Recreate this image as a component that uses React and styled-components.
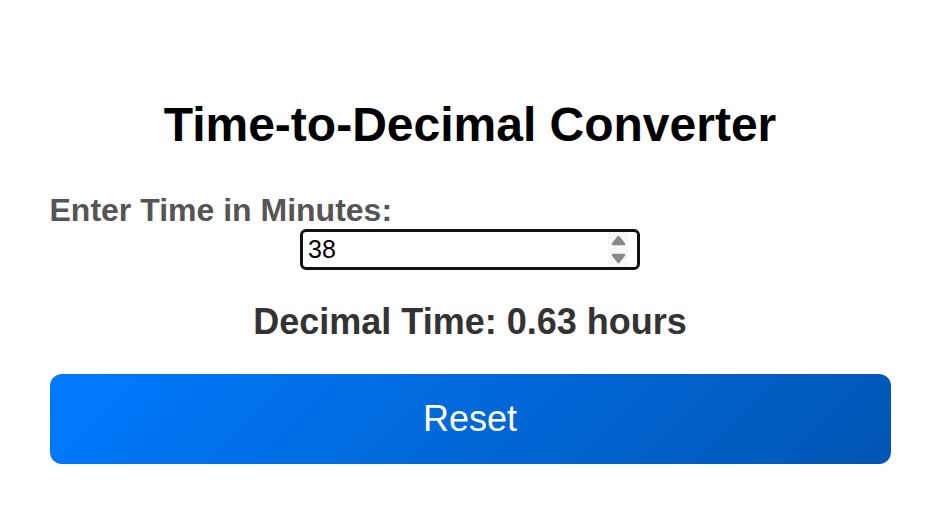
import React, { useState } from 'react'
import styled, { createGlobalStyle } from 'styled-components'

const GlobalStyle = createGlobalStyle`
    html, body {
        margin: 0;
        padding: 0;
        background: #ffffff;
        font-family: "Liberation Sans", Arial, sans-serif;
    }
`;

const Container = styled.div`
    max-width: 841px;
    margin: 0 auto;
    padding-top: 97px;
    display: flex;
    flex-direction: column;
    align-items: center;
`;

const Title = styled.h1`
    margin: 0 0 40px;
    font-size: 48px;
    font-weight: bold;
    color: #000000;
`;

const Label = styled.label`
    align-self: stretch;
    font-size: 32px;
    font-weight: bold;
    color: #555555;
`;

const InputWrap = styled.div`
    position: relative;
    width: 340px;
    height: 41px;
`;

const Input = styled.input`
    box-sizing: border-box;
    width: 100%;
    height: 100%;
    margin: 0;
    padding: 0 30px 0 5px;
    border: 3px solid #111111;
    border-radius: 6px;
    outline: none;
    font-family: "Liberation Sans", Arial, sans-serif;
    font-size: 25px;
    color: #000000;
    background: #ffffff;
    caret-color: #000000;
    -moz-appearance: textfield;

    &::-webkit-inner-spin-button,
    &::-webkit-outer-spin-button {
        -webkit-appearance: none;
        margin: 0;
    }
`;

const Spinner = styled.div`
    position: absolute;
    top: 3px;
    bottom: 3px;
    right: 12px;
    width: 20px;
    display: flex;
    flex-direction: column;
    align-items: center;
    justify-content: center;
    gap: 7px;
    background: #f7f7f7;
    cursor: default;
`;

const Arrow = styled.svg`
    display: block;
    width: 15px;
    height: 11px;
`;

const Result = styled.p`
    margin: 31px 0 31px;
    font-size: 36px;
    font-weight: bold;
    color: #333333;
`;

const ResetButton = styled.button`
    align-self: stretch;
    height: 90px;
    border: none;
    border-radius: 12px;
    background: linear-gradient(135deg, #007bff, #0056b3);
    color: #ffffff;
    font-family: "Liberation Sans", Arial, sans-serif;
    font-size: 36px;
    cursor: pointer;
`;

export default function App() {
    const [minutes, setMinutes] = useState('38');
    const hours = minutes === '' ? 0 : Number(minutes) / 60;
    const step = (d) => setMinutes(String((Number(minutes) || 0) + d));

    return (
        <>
            <GlobalStyle />
            <Container>
                <Title>Time-to-Decimal Converter</Title>
                <Label htmlFor="minutes">Enter Time in Minutes:</Label>
                <InputWrap>
                    <Input
                        id="minutes"
                        type="number"
                        autoFocus
                        value={minutes}
                        onChange={(e) => setMinutes(e.target.value)}
                    />
                    <Spinner>
                        <Arrow viewBox="0 0 15 11" onClick={() => step(1)}>
                            <path d="M7.5 2 L13 9 L2 9 Z" fill="#888" stroke="#888" strokeWidth="2.5" strokeLinejoin="round" />
                        </Arrow>
                        <Arrow viewBox="0 0 15 11" onClick={() => step(-1)}>
                            <path d="M2 2 L13 2 L7.5 9 Z" fill="#888" stroke="#888" strokeWidth="2.5" strokeLinejoin="round" />
                        </Arrow>
                    </Spinner>
                </InputWrap>
                <Result>Decimal Time: {hours.toFixed(2)} hours</Result>
                <ResetButton onClick={() => setMinutes('')}>Reset</ResetButton>
            </Container>
        </>
    );
}
